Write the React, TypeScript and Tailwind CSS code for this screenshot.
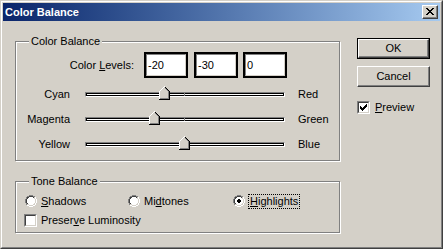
import React from "react";

const PAL: Record<string, string> = {
  G: "#808080",
  K: "#404040",
  W: "#ffffff",
  L: "#d4d0c8",
  F: "#d4d0c8",
  B: "#000000",
};

function Pix({ rows, className, style }: { rows: string[]; className?: string; style?: React.CSSProperties }) {
  const w = rows[0].length;
  const h = rows.length;
  return (
    <svg
      width={w}
      height={h}
      viewBox={`0 0 ${w} ${h}`}
      shapeRendering="crispEdges"
      className={"block shrink-0 " + (className ?? "")}
      style={style}
    >
      {rows.flatMap((r, y) =>
        r.split("").map((c, x) =>
          c === "." ? null : <rect key={`${x}-${y}`} x={x} y={y} width={1} height={1} fill={PAL[c]} />
        )
      )}
    </svg>
  );
}

const RADIO_OFF = [
  "....GGGG....",
  "..GGKKKKGG..",
  ".GKKWWWWKLW.",
  ".GKWWWWWWLW.",
  "GKWWWWWWWWLW",
  "GKWWWWWWWWLW",
  "GKWWWWWWWWLW",
  "GKWWWWWWWWLW",
  ".GKWWWWWWLW.",
  ".GLLWWWWLLW.",
  "..WWLLLLWW..",
  "....WWWW....",
];

const RADIO_ON = [
  "....GGGG....",
  "..GGKKKKGG..",
  ".GKKWWWWKLW.",
  ".GKWWWWWWLW.",
  "GKWWWBBWWWLW",
  "GKWWBBBBWWLW",
  "GKWWBBBBWWLW",
  "GKWWWBBWWWLW",
  ".GKWWWWWWLW.",
  ".GLLWWWWLLW.",
  "..WWLLLLWW..",
  "....WWWW....",
];

const CHECK = [
  "......B",
  ".....BB",
  "B...BBB",
  "BB.BBB.",
  "BBBBB..",
  ".BBB...",
  "..B....",
];

const THUMB = [
  ".....W.....",
  "....WFB....",
  "...WFFGB...",
  "..WFFFFGB..",
  ".WFFFFFFGB.",
  "WFFFFFFFFGB",
  "WFFFFFFFFGB",
  "WFFFFFFFFGB",
  "WFFFFFFFFGB",
  "WFFFFFFFFGB",
  "WFFFFFFFFGB",
  "WFFFFFFFFGB",
  "WGGGGGGGGGB",
  "BBBBBBBBBBB",
];

const CLOSE_X = [
  "BB....BB",
  ".BB..BB.",
  "..BBBB..",
  "...BB...",
  "..BBBB..",
  ".BB..BB.",
  "BB....BB",
];

function CheckBox({ checked }: { checked?: boolean }) {
  return (
    <div className="w-[13px] h-[13px] shrink-0 border border-t-[#808080] border-l-[#808080] border-b-white border-r-white">
      <div className="w-full h-full border border-t-[#404040] border-l-[#404040] border-b-[#d4d0c8] border-r-[#d4d0c8] bg-white">
        {checked && <Pix rows={CHECK} className="ml-px mt-px" />}
      </div>
    </div>
  );
}

function Group({ legend, className, children }: { legend: string; className: string; children: React.ReactNode }) {
  return (
    <div
      className={
        "relative w-[325px] border border-[#808080] shadow-[inset_1px_1px_0_#fff,1px_1px_0_#fff] " + className
      }
    >
      <div className="absolute left-[13px] top-[-7px] px-[2px] bg-[#d4d0c8] whitespace-nowrap">{legend}</div>
      {children}
    </div>
  );
}

function Field({ value, className }: { value: string; className?: string }) {
  return (
    <div className={"w-[44px] h-[26px] border-2 border-black " + (className ?? "")}>
      <div className="w-full h-full border border-t-[#808080] border-l-[#808080] border-b-[#d4d0c8] border-r-[#d4d0c8] bg-white flex items-center pl-px">
        {value}
      </div>
    </div>
  );
}

function SliderRow({ left, right, value }: { left: string; right: string; value: number }) {
  return (
    <div className="flex items-center h-[25px]">
      <div className="w-[54px] text-right">{left}</div>
      <div className="relative ml-[15px] w-[200px] h-[5px] border border-t-[#808080] border-l-[#808080] border-b-white border-r-white">
        <div className="h-full border border-black bg-white" />
        <div className="absolute left-[98px] top-0 h-full w-px bg-[#808080]" />
        <Pix rows={THUMB} className="absolute top-[-7px]" style={{ left: 93 + value }} />
      </div>
      <div className="ml-[13px]">{right}</div>
    </div>
  );
}

function Button({ label, isDefault, className }: { label: string; isDefault?: boolean; className?: string }) {
  if (isDefault) {
    return (
      <div className={"w-[73px] h-[21px] border border-black " + (className ?? "")}>
        <div className="w-full h-full border border-t-white border-l-white border-b-[#404040] border-r-[#404040] shadow-[inset_-1px_-1px_0_#808080] flex items-center justify-center">
          {label}
        </div>
      </div>
    );
  }
  return (
    <div
      className={
        "w-[73px] h-[21px] border border-t-white border-l-white border-b-[#404040] border-r-[#404040] shadow-[inset_-1px_-1px_0_#808080] flex items-center justify-center " +
        (className ?? "")
      }
    >
      {label}
    </div>
  );
}

export default function App() {
  return (
    <div className="w-[443px] h-[249px] bg-[#d4d0c8] border border-t-[#d4d0c8] border-l-[#d4d0c8] border-b-[#404040] border-r-[#404040] font-['Liberation_Sans',Arial,sans-serif] text-[11px] leading-[13px] text-black">
      <div className="h-full border border-t-white border-l-white border-b-[#808080] border-r-[#808080] p-px flex flex-col">
        {/* Title bar */}
        <div className="h-[18px] shrink-0 flex items-center bg-linear-to-r from-[#0a246a] to-[#a6caf0] pl-[2px] pr-[2px]">
          <div className="flex-1 font-bold text-white whitespace-nowrap">Color Balance</div>
          <div className="w-[16px] h-[14px] bg-[#d4d0c8] border border-t-white border-l-white border-b-[#404040] border-r-[#404040] shadow-[inset_-1px_-1px_0_#808080] pl-[3px] pt-[2px]">
            <Pix rows={CLOSE_X} />
          </div>
        </div>

        {/* Body */}
        <div className="flex flex-1">
          <div className="ml-[12px] mt-[20px] flex flex-col">
            <Group legend="Color Balance" className="h-[120px]">
              <div className="pt-[10px] flex flex-col">
                <div className="flex items-center h-[26px]">
                  <div className="w-[118px] text-right whitespace-nowrap">
                    Color <span className="underline">L</span>evels:
                  </div>
                  <Field value="-20" className="ml-[10px]" />
                  <Field value="-30" className="ml-[6px]" />
                  <Field value="0" className="ml-[5px]" />
                </div>
                <div className="mt-[4px] flex flex-col">
                  <SliderRow left="Cyan" right="Red" value={-20} />
                  <SliderRow left="Magenta" right="Green" value={-30} />
                  <SliderRow left="Yellow" right="Blue" value={0} />
                </div>
              </div>
            </Group>

            <Group legend="Tone Balance" className="h-[52px] mt-[20px]">
              <div className="flex flex-col">
                <div className="mt-[11px] h-[16px] flex items-center pl-[9px]">
                  <div className="w-[103px] flex items-center">
                    <Pix rows={RADIO_OFF} />
                    <span className="ml-[4px]">
                      <span className="underline">S</span>hadows
                    </span>
                  </div>
                  <div className="w-[105px] flex items-center">
                    <Pix rows={RADIO_OFF} />
                    <span className="ml-[4px]">
                      Mi<span className="underline">d</span>tones
                    </span>
                  </div>
                  <div className="flex items-center">
                    <Pix rows={RADIO_ON} />
                    <span className="ml-[3px] border border-dotted border-black px-px">
                      <span className="underline">H</span>ighlights
                    </span>
                  </div>
                </div>
                <div className="mt-[4px] h-[15px] flex items-center pl-[8px]">
                  <CheckBox />
                  <span className="ml-[4px] whitespace-nowrap">
                    Preser<span className="underline">v</span>e Luminosity
                  </span>
                </div>
              </div>
            </Group>
          </div>

          <div className="ml-[17px] mt-[17px] flex flex-col">
            <Button label="OK" isDefault />
            <Button label="Cancel" className="mt-[7px]" />
            <div className="mt-[14px] flex items-center">
              <CheckBox checked />
              <span className="ml-[5px]">
                <span className="underline">P</span>review
              </span>
            </div>
          </div>
        </div>
      </div>
    </div>
  );
}
